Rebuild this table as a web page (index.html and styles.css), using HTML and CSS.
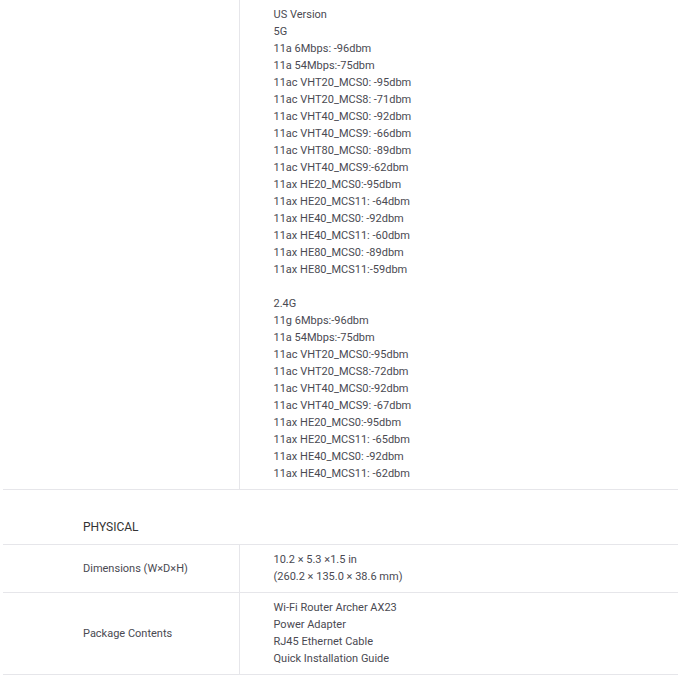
FILE: index.html
```html
<!DOCTYPE html>
<html lang="en">
<head>
  <meta charset="UTF-8">
  <title>Archer AX23 Specifications</title>
  <link rel="stylesheet" href="styles.css">
</head>
<body>

  <div class="specs">
    <table class="spec-table">
      <tr>
        <th class="label"></th>
        <td class="value">
          US Version<br>
          5G<br>
          11a 6Mbps: -96dbm<br>
          11a 54Mbps:-75dbm<br>
          11ac VHT20_MCS0: -95dbm<br>
          11ac VHT20_MCS8: -71dbm<br>
          11ac VHT40_MCS0: -92dbm<br>
          11ac VHT40_MCS9: -66dbm<br>
          11ac VHT80_MCS0: -89dbm<br>
          11ac VHT40_MCS9:-62dbm<br>
          11ax HE20_MCS0:-95dbm<br>
          11ax HE20_MCS11: -64dbm<br>
          11ax HE40_MCS0: -92dbm<br>
          11ax HE40_MCS11: -60dbm<br>
          11ax HE80_MCS0: -89dbm<br>
          11ax HE80_MCS11:-59dbm<br>
          <br>
          2.4G<br>
          11g 6Mbps:-96dbm<br>
          11a 54Mbps:-75dbm<br>
          11ac VHT20_MCS0:-95dbm<br>
          11ac VHT20_MCS8:-72dbm<br>
          11ac VHT40_MCS0:-92dbm<br>
          11ac VHT40_MCS9: -67dbm<br>
          11ax HE20_MCS0:-95dbm<br>
          11ax HE20_MCS11: -65dbm<br>
          11ax HE40_MCS0: -92dbm<br>
          11ax HE40_MCS11: -62dbm
        </td>
      </tr>
    </table>

    <h3 class="section-title">PHYSICAL</h3>

    <table class="spec-table">
      <tr>
        <th class="label">Dimensions (W×D×H)</th>
        <td class="value">
          10.2 × 5.3 ×1.5 in<br>
          (260.2 × 135.0 × 38.6 mm)
        </td>
      </tr>
      <tr>
        <th class="label">Package Contents</th>
        <td class="value">
          Wi-Fi Router Archer AX23<br>
          Power Adapter<br>
          RJ45 Ethernet Cable<br>
          Quick Installation Guide
        </td>
      </tr>
    </table>
  </div>

</body>
</html>
```

FILE: styles.css
```css
body {
  margin: 0;
  background: #fff;
  font-family: Roboto, "Liberation Sans", sans-serif;
  color: #4a4a52;
}

.specs {
  margin: 0 1px 0 3px;
}

.spec-table {
  width: 100%;
  border-collapse: collapse;
  font-size: 11px;
  line-height: 17px;
}

.spec-table tr {
  border-bottom: 1px solid #e6e6ea;
}

.spec-table .label {
  width: 236px;
  padding: 6px 0 7px 80px;
  box-sizing: border-box;
  border-right: 1px solid #e6e6ea;
  text-align: left;
  font-weight: normal;
  vertical-align: middle;
}

.spec-table .value {
  padding: 6px 0 7px 34px;
  vertical-align: top;
}

.section-title {
  margin: 0;
  padding: 28px 0 8px 80px;
  font-size: 12px;
  line-height: 18px;
  font-weight: normal;
  color: #333;
  border-bottom: 1px solid #e6e6ea;
}
```
